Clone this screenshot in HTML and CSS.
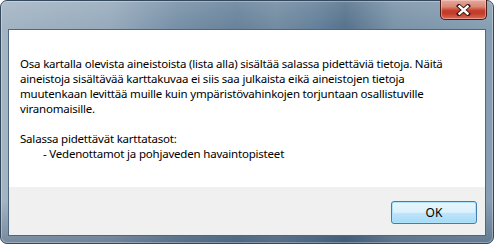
FILE: index.html
```html
<!DOCTYPE html>
<html lang="fi">
<head>
    <meta charset="UTF-8">
    <title>Ilmoitus</title>
    <link rel="stylesheet" href="styles.css">
</head>
<body>
    <div class="window">
        <div class="titlebar">
            <button class="close-btn" aria-label="Sulje">
                <svg width="15" height="12" viewBox="0 0 15 12">
                    <path d="M3 2 L12 10 M12 2 L3 10" stroke="#3a1410" stroke-width="4.2" stroke-linecap="square" fill="none"/>
                    <path d="M3.5 2.5 L11.5 9.5 M11.5 2.5 L3.5 9.5" stroke="#ffffff" stroke-width="2.4" stroke-linecap="square" fill="none"/>
                </svg>
            </button>
        </div>
        <div class="client">
            <div class="message">
                <p>Osa kartalla olevista aineistoista (lista alla) sisältää salassa pidettäviä tietoja. Näitä<br>
                aineistoja sisältävää karttakuvaa ei siis saa julkaista eikä aineistojen tietoja<br>
                muutenkaan levittää muille kuin ympäristövahinkojen torjuntaan osallistuville<br>
                viranomaisille.</p>
                <p>Salassa pidettävät karttatasot:<br>
                <span class="indent">- Vedenottamot ja pohjaveden havaintopisteet</span></p>
            </div>
            <div class="buttons">
                <button class="ok-btn">OK</button>
            </div>
        </div>
    </div>
</body>
</html>
```

FILE: styles.css
```css
body {
    margin: 0;
    width: 494px;
    height: 244px;
    overflow: hidden;
    background: #ffffff;
    font-family: "Noto Sans", "Open Sans", sans-serif;
}

/* Window frame */
.window {
    box-sizing: border-box;
    width: 494px;
    height: 244px;
    border: 1px solid #34495e;
    border-radius: 7px;
    padding: 0 7px 7px 7px;
    display: flex;
    flex-direction: column;
    background:
        linear-gradient(180deg, rgba(255,255,255,0.12) 0px, rgba(255,255,255,0) 28px, rgba(0,0,0,0) 200px, rgba(20,40,70,0.3) 100%),
        linear-gradient(90deg, #a3b4c3 0%, #96aabc 22%, #768fa6 36%, #67829a 48%, #728ba1 56%, #64809a 64%, #56728c 70%, #7a93a8 80%, #889fb3 100%);
    box-shadow: inset 0 0 0 1px rgba(255,255,255,0.3);
}

.titlebar {
    height: 28px;
    display: flex;
    justify-content: flex-end;
    align-items: flex-start;
}

.close-btn {
    width: 47px;
    height: 20px;
    margin-top: -1px;
    margin-right: -1px;
    padding: 0;
    border: 1px solid #4a1a16;
    border-top: none;
    border-radius: 0 0 5px 5px;
    background: linear-gradient(180deg, #e4a99c 0%, #d98878 35%, #c6402c 55%, #c23a28 70%, #d86c58 100%);
    box-shadow: inset 0 0 0 1px rgba(255,220,210,0.45);
    display: flex;
    align-items: center;
    justify-content: center;
}

/* Client area */
.client {
    flex: 1;
    display: flex;
    flex-direction: column;
    border: 1px solid #4e6780;
    background: #ffffff;
}

.message {
    flex: 1;
    padding: 26px 0 0 11px;
    font-size: 11.5px;
    letter-spacing: -0.2px;
    line-height: 15px;
    white-space: nowrap;
    color: #000000;
}

.message p {
    margin: 0 0 15px 0;
}

.indent {
    padding-left: 23px;
}

.buttons {
    height: 48px;
    background: #f0f0f0;
    display: flex;
    justify-content: flex-end;
    align-items: flex-start;
    padding: 14px 8px 0 0;
    box-sizing: border-box;
}

.ok-btn {
    width: 86px;
    height: 23px;
    border: 1px solid #3c7fb1;
    border-radius: 3px;
    background: linear-gradient(180deg, #eaf6fd 0%, #d9f0fc 50%, #bee6fd 51%, #a7d9f5 100%);
    box-shadow: inset 0 0 0 1px #aee4fa;
    font-family: "Noto Sans", "Open Sans", sans-serif;
    font-size: 12px;
    color: #000000;
    padding: 0;
}
```
